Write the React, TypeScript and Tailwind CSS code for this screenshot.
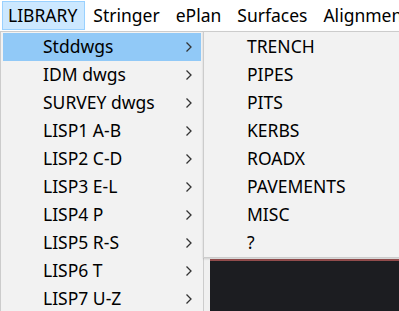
const barItems = ["LIBRARY", "Stringer", "ePlan", "Surfaces", "Alignment"];

const libraryItems = [
  "Stddwgs",
  "IDM dwgs",
  "SURVEY dwgs",
  "LISP1 A-B",
  "LISP2 C-D",
  "LISP3 E-L",
  "LISP4 P",
  "LISP5 R-S",
  "LISP6 T",
  "LISP7 U-Z",
];

const stdItems = ["TRENCH", "PIPES", "PITS", "KERBS", "ROADX", "PAVEMENTS", "MISC", "?"];

function Chevron() {
  return (
    <svg width="8" height="12" viewBox="0 0 8 12" className="shrink-0">
      <polyline points="1.5,1.5 6,6 1.5,10.5" fill="none" stroke="#333" strokeWidth="1.3" />
    </svg>
  );
}

export default function App() {
  return (
    <div
      className="relative w-[399px] h-[311px] overflow-hidden bg-[#f0f0f0] text-[17.5px] leading-none text-black"
      style={{ fontFamily: '"Noto Sans", "Open Sans", sans-serif' }}
    >
      {/* Menu bar */}
      <div className="flex h-[31px] items-center bg-white whitespace-nowrap">
        {barItems.map((item, i) => (
          <div
            key={item}
            className={
              i === 0
                ? "ml-[2px] flex h-[29px] items-center border border-[#99d1ff] bg-[#cce8ff] pl-[5px] pr-[7px]"
                : "flex h-[29px] items-center px-[8px]"
            }
          >
            {item}
          </div>
        ))}
      </div>

      {/* Background app area */}
      <div className="flex h-[280px]">
        <div className="w-[210px] bg-[#f0f0f0]" />
        <div className="mt-[228px] flex-1 border-t-2 border-[#944d4d] bg-[#1c1d21]" />
      </div>

      {/* LIBRARY dropdown */}
      <div className="absolute left-0 top-[31px] w-[204px] border border-[#cccccc] bg-[#f2f2f2] px-[2px] pt-[1px] pb-[2px]">
        {libraryItems.map((item, i) => (
          <div
            key={item}
            className={
              "flex h-[28px] items-center justify-between pl-[40px] pr-[8px] " +
              (i === 0 ? "bg-[#91c9f7]" : "")
            }
          >
            <span>{item}</span>
            <Chevron />
          </div>
        ))}
      </div>

      {/* Stddwgs submenu */}
      <div className="absolute left-[203px] top-[31px] h-[227px] w-[210px] border border-[#cccccc] bg-[#f2f2f2] pt-[1px] shadow-[0_1px_2px_rgba(0,0,0,0.15)]">
        {stdItems.map((item) => (
          <div key={item} className="flex h-[28px] items-center pl-[43px]">
            {item}
          </div>
        ))}
      </div>
    </div>
  );
}
